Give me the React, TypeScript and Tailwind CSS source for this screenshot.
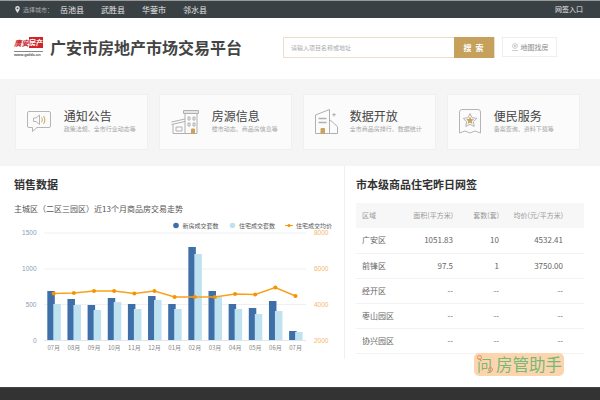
const cjk = "font-['Noto_Sans_CJK_SC','Noto_Sans',sans-serif]";

const cities = ["岳池县", "武胜县", "华蓥市", "邻水县"];

const months = ["07月", "08月", "09月", "10月", "11月", "12月", "01月", "02月", "03月", "04月", "05月", "06月", "07月"];
// tops of the bars and the line, read off the reference in page pixels
const darkTops = [291, 299, 305, 298, 304, 296, 304, 247, 291, 304, 308, 301, 331];
const lightTops = [304, 305, 310, 302, 309, 300, 309, 254, 297, 309, 314, 311, 332];
const lineY = [293.5, 293, 291, 291, 293.5, 291, 297, 297, 297, 294, 294.5, 287.5, 296];

const rows = [
  ["广安区", "1051.83", "10", "4532.41"],
  ["前锋区", "97.5", "1", "3750.00"],
  ["经开区", "--", "--", "--"],
  ["枣山园区", "--", "--", "--"],
  ["协兴园区", "--", "--", "--"],
];

function NoticeIcon() {
  return (
    <svg width="24" height="22" viewBox="0 0 24 22" fill="none" stroke="#b5b5b5" strokeWidth="1">
      <path d="M2 .5h20a1.500 1.500 0 0 1 1.500 1.500v13a1.500 1.500 0 0 1-1.500 1.500H10l-4.500 4v-4H2A1.500 1.500 0 0 1 .5 15V2A1.500 1.500 0 0 1 2 .5z" />
      <path d="M6.500 7h2.500l3.500-3v9.500L9 10.500H6.500z" />
      <path d="M14.500 6.500c1 1.300 1 3.500 0 4.800" stroke="#c9a45c" />
      <path d="M16.500 5c1.800 2.200 1.800 5.800 0 8" stroke="#c9a45c" />
    </svg>
  );
}

function HouseIcon() {
  return (
    <svg width="28" height="24" viewBox="0 0 28 24" fill="none" stroke="#b0b0b0" strokeWidth="1">
      <path d="M12.500 .5h15v3h-15z" fill="#e4e4e4" />
      <path d="M14 3.500v20h12v-20" />
      <path d="M17 7h2v3h-2zM22 7h2v3h-2zM17 13h2v3h-2zM22 13h2v3h-2z" />
      <path d="M20.500 19h3v4.500h-3z" fill="#c9a45c" stroke="#c9a45c" />
      <path d="M.5 12l13.500-3M.5 14.500l13.500-3" />
      <path d="M2 14.500v9h12M5 17h6v4H5z" />
    </svg>
  );
}

function DataIcon() {
  return (
    <svg width="23" height="25" viewBox="0 0 23 25" fill="none" stroke="#b0b0b0" strokeWidth="1">
      <path d="M.5 6l14-5.500v24H.5z" />
      <path d="M14.500 10.500l8 7v7h-8" />
      <path d="M3.500 9.500h8M3.500 13.500h8" strokeWidth="1.500" />
      <path d="M6 19.500h3.500v5H6z" fill="#c9a45c" stroke="#c9a45c" />
      <path d="M19 4v3.500M17.300 5.700h3.500" />
    </svg>
  );
}

function ServiceIcon() {
  return (
    <svg width="22" height="25" viewBox="0 0 22 25" fill="none" stroke="#b5b5b5" strokeWidth="1">
      <path d="M3 .5h16a2.500 2.500 0 0 1 2.500 2.500v21l-5.500-2-5 2-5-2-5.500 2V3A2.500 2.500 0 0 1 3 .5z" />
      <path d="M11 4.500l2 4.200 4.800.7-3.400 3.300.8 4.800-4.200-2.200-4.200 2.200.8-4.800-3.400-3.300 4.800-.7z" />
      <path d="M11 7.500l1.100 2.600 2.900.2-2.200 1.900.7 2.800-2.500-1.500-2.500 1.500.7-2.800-2.200-1.900 2.900-.2z" fill="#c9a45c" stroke="none" />
    </svg>
  );
}

function SalesChart() {
  const slot = 20.15;
  return (
    <svg width="343" height="140" viewBox="0 220 343 140" className="mt-[5px] block">
      {[233, 269, 304.5].map((y) => (
        <line key={y} x1="44" x2="306" y1={y} y2={y} stroke="#eef0f4" strokeWidth="1" />
      ))}
      <line x1="44" x2="306" y1="340.5" y2="340.5" stroke="#dfe6f0" strokeWidth="1" />

      {[["1500", 233], ["1000", 269], ["500", 304.5], ["0", 340.5]].map(([t, y]) => (
        <text key={t} x="36.500" y={Number(y) + 2.300} textAnchor="end" fontSize="6.500" fill="#8a9db8" fontFamily="'Liberation Sans',sans-serif">{t}</text>
      ))}
      {[["8000", 233], ["6000", 269], ["4000", 304.5], ["2000", 340.5]].map(([t, y]) => (
        <text key={t} x="314" y={Number(y) + 2.300} fontSize="6.500" fill="#f5b76a" fontFamily="'Liberation Sans',sans-serif">{t}</text>
      ))}

      {months.map((m, i) => {
        const x = 47.3 + i * slot;
        return (
          <g key={i}>
            <rect x={x} y={darkTops[i]} width="7.500" height={340 - darkTops[i]} fill="#3f6fa8" />
            <rect x={x + 6} y={lightTops[i]} width="7.500" height={340 - lightTops[i]} fill="#bfe2f0" />
            <text x={x + 6.500} y="350" textAnchor="middle" fontSize="6" fill="#888" fontFamily="'Noto Sans CJK SC',sans-serif">{m}</text>
          </g>
        );
      })}

      <polyline
        points={lineY.map((y, i) => `${53.7 + i * slot},${y}`).join(" ")}
        fill="none"
        stroke="#f9a11b"
        strokeWidth="1.500"
      />
      {lineY.map((y, i) => (
        <circle key={i} cx={53.7 + i * slot} cy={y} r="2" fill="#f59300" />
      ))}

      {/* legend */}
      <circle cx="176" cy="225.500" r="2.800" fill="#3f6fa8" />
      <text x="182.500" y="228" fontSize="6" fill="#555" fontFamily="'Noto Sans CJK SC',sans-serif">新房成交套数</text>
      <circle cx="232.500" cy="225.500" r="2.800" fill="#bfe2f0" />
      <text x="239" y="228" fontSize="6" fill="#555" fontFamily="'Noto Sans CJK SC',sans-serif">住宅成交套数</text>
      <line x1="285" x2="293" y1="225.500" y2="225.500" stroke="#f9a11b" strokeWidth="1" />
      <circle cx="289" cy="225.500" r="1.600" fill="#f59300" />
      <text x="296" y="228" fontSize="6" fill="#555" fontFamily="'Noto Sans CJK SC',sans-serif">住宅成交均价</text>
    </svg>
  );
}

function Card({ icon, title, sub, iconBox }: { icon: React.ReactNode; title: string; sub: string; iconBox: string }) {
  return (
    <div className="flex h-[55.600px] w-[133.600px] items-center border border-[#f0f0f0] bg-[#fbfbfb]">
      <div className={`shrink-0 pl-[11px] ${iconBox}`}>{icon}</div>
      <div className="mb-[2px]">
        <div className="text-[12px] leading-[16px] text-[#444]">{title}</div>
        <div className="mt-[1px] text-[6px] leading-[8px] whitespace-nowrap text-[#a5a5a5]">{sub}</div>
      </div>
    </div>
  );
}

export default function App() {
  return (
    <div className={`relative h-[400px] w-[600px] overflow-hidden bg-white ${cjk}`}>
      {/* Top bar */}
      <div className="flex h-[18px] items-center border-t border-[#9a9a9a] bg-[#3a4145] pr-[17px] pl-[15px]">
        <svg width="5" height="7" viewBox="0 0 5 7" className="mr-[3px]">
          <path d="M2.500 0a2.300 2.300 0 0 1 2.300 2.300C4.800 4 2.500 7 2.500 7S.2 4 .2 2.300A2.300 2.300 0 0 1 2.500 0z" fill="#ddd" />
          <circle cx="2.500" cy="2.300" r=".9" fill="#3a4145" />
        </svg>
        <span className="w-[37px] text-[6px] whitespace-nowrap text-[#a8acae]">选择城市：</span>
        <div className="flex gap-[17px]">
          {cities.map((c) => (
            <span key={c} className="text-[8px] text-[#e6e6e6]">{c}</span>
          ))}
        </div>
        <span className="ml-auto text-[7px] text-[#e6e6e6]">网签入口</span>
      </div>

      {/* Header */}
      <div className="flex h-[61px] items-center pb-[3px] pl-[14px]">
        <div className="w-[36px]">
          <div className="flex h-[11px] w-[29px] whitespace-nowrap">
            <span className="w-[15px] text-[7.500px] leading-[11px] font-bold text-[#c8252b] italic">廣安</span>
            <span className="w-[14px] bg-[#d2232a] text-center text-[7px] leading-[11px] font-bold text-white">房产</span>
          </div>
          <div className="mt-[3px] w-[29px] border-t border-[#888] font-['Liberation_Sans',sans-serif] text-[4px] leading-[6px] font-bold whitespace-nowrap text-[#555]">www.gafdc.cn</div>
        </div>
        <h1 className="text-[16px] font-bold text-[#444]">广安市房地产市场交易平台</h1>

        <div className="ml-[41px] flex h-[21px] w-[212px] border border-[#eadfca]">
          <span className="flex-1 pl-[7px] text-[6px] leading-[19px] text-[#aaa]">请输入项目名称或地址</span>
          <span className="-my-px w-[40px] bg-[#c6a15b] text-center text-[8px] leading-[21px] font-bold tracking-[1px] text-white">搜 索</span>
        </div>
        <div className="ml-[7px] flex h-[20px] w-[55px] items-center justify-center gap-[2px] border border-[#eeeeee] text-[7px] text-[#888]">
          <svg width="8" height="8" viewBox="0 0 8 8" fill="none" stroke="#aaa" strokeWidth=".6">
            <circle cx="4" cy="3" r="2.400" />
            <circle cx="4" cy="3" r=".8" />
            <path d="M1 7.500h6" />
          </svg>
          地图找房
        </div>
      </div>

      {/* Entry cards */}
      <div className="flex h-[87px] gap-[10.400px] bg-[#f5f5f5] pt-[15px] pl-[14.700px]">
        <Card icon={<NoticeIcon />} iconBox="w-[48px]" title="通知公告" sub="政策法规、全市行业动态等" />
        <Card icon={<HouseIcon />} iconBox="w-[52px]" title="房源信息" sub="楼市动态、商品房信息等" />
        <Card icon={<DataIcon />} iconBox="w-[46px]" title="数据开放" sub="全市商品房排行、数据统计" />
        <Card icon={<ServiceIcon />} iconBox="w-[46px]" title="便民服务" sub="备案查询、资料下载等" />
      </div>

      {/* Sales data + table */}
      <div className="flex h-[221px] items-start">
        <div className="h-[193px] w-[345px] shrink-0 border-r border-[#f0f0f0]">
          <h2 className="mt-[10px] pl-[14px] text-[11px] leading-[16px] font-bold text-[#333]">销售数据</h2>
          <p className="mt-[11px] pl-[14px] text-[8px] leading-[12px] text-[#555]">主城区（二区三园区）近13个月商品房交易走势</p>
          <SalesChart />
        </div>
        <div className="flex-1 pt-[10px] pl-[11px]">
          <h2 className="text-[11px] leading-[16px] font-bold text-[#333]">市本级商品住宅昨日网签</h2>
          <table className="mt-[11px] w-[228px] table-fixed border-collapse text-right">
            <thead>
              <tr className="h-[25px] bg-[#f7f7f7] text-[7px] text-[#999]">
                <th className="w-[41px] pl-[6px] text-left font-normal">区域</th>
                <th className="w-[56px] font-normal">面积(平方米)</th>
                <th className="w-[46px] font-normal">套数(套)</th>
                <th className="w-[64px] font-normal">均价(元/平方米)</th>
                <th className="font-normal" />
              </tr>
            </thead>
            <tbody>
              {rows.map((r) => (
                <tr key={r[0]} className="h-[25px] border-b border-[#f2f2f2] text-[8px] text-[#666]">
                  <td className="pl-[6px] text-left whitespace-nowrap">{r[0]}</td>
                  <td>{r[1]}</td>
                  <td>{r[2]}</td>
                  <td>{r[3]}</td>
                  <td />
                </tr>
              ))}
            </tbody>
          </table>
        </div>
      </div>

      <div className="h-[13px] border-t border-[#444] bg-[#333333]" />

      {/* Watermark over the page */}
      <div className="absolute top-[353px] left-[474px] flex h-[23px] w-[90px] items-center rounded-[5px] bg-[#fcd5ae] pl-[3px] text-[#78b878]">
        <span className="relative w-[19px] text-[15px] leading-[23px]">
          问
          <span className="absolute top-[2px] left-[0px] h-[5px] w-[5px] rounded-full border border-[#f08a5d]" />
          <span className="absolute top-[14px] left-[11px] h-[5px] w-[5px] rounded-full border border-[#f08a5d]" />
        </span>
        <span className="text-[16.500px] leading-[23px] whitespace-nowrap">房管助手</span>
      </div>
    </div>
  );
}
